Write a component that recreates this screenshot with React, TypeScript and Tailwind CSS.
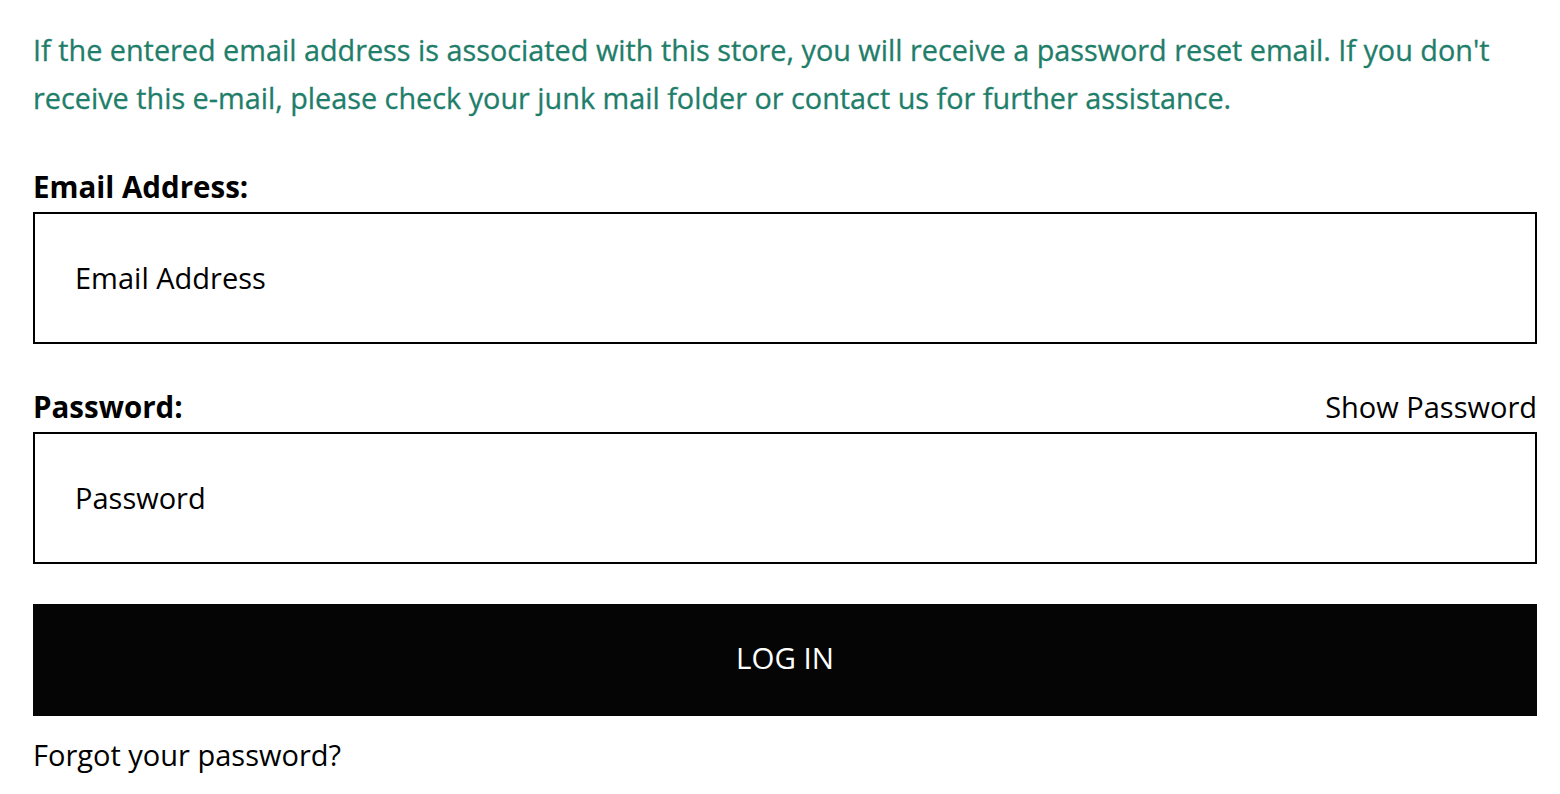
import React from "react";

export default function App() {
  return (
    <div className="min-h-screen bg-white pl-[33px] pr-[23px] pt-[26px]" style={{ fontFamily: "'Open Sans', 'Noto Sans', sans-serif" }}>
      <p className="text-[28.8px] leading-[48px] text-[#1f7e6a] font-medium [-webkit-text-stroke:0.3px_#1f7e6a]">
        If the entered email address is associated with this store, you will receive a password reset email. If you don't receive this e-mail, please check your junk mail folder or contact us for further assistance.
      </p>
      <form className="mt-[49px] flex flex-col">
        <label className="text-[29.5px] leading-[32px] font-bold text-black">Email Address:</label>
        <div className="mt-[9px] h-[132px] border-2 border-black flex items-center pl-[40px]">
          <span className="text-[29px] text-black">Email Address</span>
        </div>
        <div className="mt-[47px] flex items-center justify-between">
          <span className="text-[29.5px] leading-[32px] font-bold text-black">Password:</span>
          <span className="text-[29px] leading-[32px] text-black">Show Password</span>
        </div>
        <div className="mt-[9px] h-[132px] border-2 border-black flex items-center pl-[40px]">
          <span className="text-[29px] text-black">Password</span>
        </div>
        <button type="button" className="mt-[40px] h-[112px] w-full bg-[#050505] text-white text-[29.5px] pb-[3px]">
          LOG IN
        </button>
        <span className="mt-[23px] text-[29px] leading-[32px] text-black">Forgot your password?</span>
      </form>
    </div>
  );
}
